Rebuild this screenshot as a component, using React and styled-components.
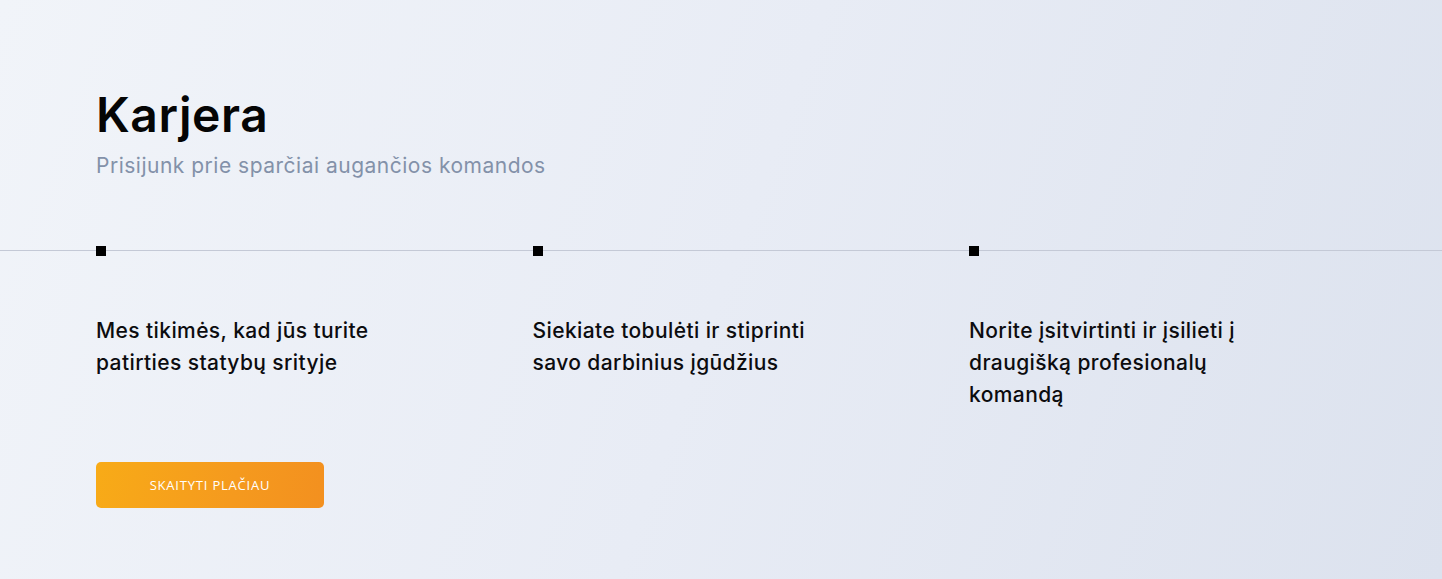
import styled, { createGlobalStyle } from "styled-components";

const GlobalStyle = createGlobalStyle`
  html, body {
    margin: 0;
    padding: 0;
  }
  body {
    font-family: Inter, "Noto Sans", sans-serif;
    -webkit-font-smoothing: antialiased;
  }
`;

/* ────── LAYOUT ────── */
const Section = styled.section`
  width: 100%;
  height: 579px;
  box-sizing: border-box;
  padding-top: 86px;
  background: linear-gradient(110deg, #f1f4f9 0%, #e8ecf5 50%, #dce2ee 100%);
  overflow: hidden;
`;

const Header = styled.header`
  padding-left: 96px;
`;

const Title = styled.h1`
  margin: 0;
  font-size: 48px;
  line-height: 58px;
  font-weight: 600;
  color: #050505;
  letter-spacing: 0.6px;
`;

const Subtitle = styled.p`
  margin: 8px 0 0;
  font-size: 21px;
  line-height: 28px;
  font-weight: 400;
  color: #8391a9;
  letter-spacing: 0.5px;
`;

/* ────── TIMELINE ────── */
const Timeline = styled.div`
  margin-top: 70px;
  border-top: 1px solid #c4c9d6;
  padding-left: 96px;
`;

const Columns = styled.div`
  display: grid;
  grid-template-columns: repeat(3, 436.5px);
`;

const Item = styled.div`
  display: flex;
  flex-direction: column;
`;

const Marker = styled.span`
  display: block;
  width: 10px;
  height: 10px;
  margin-top: -5px;
  background: #000;
`;

const ItemText = styled.p`
  margin: 59px 0 0;
  max-width: 300px;
  font-size: 21px;
  line-height: 32px;
  font-weight: 500;
  letter-spacing: 0.4px;
  color: #0c0c0f;
`;

/* ────── BUTTON ────── */
const Actions = styled.div`
  padding-left: 96px;
  margin-top: 51px;
`;

const Button = styled.button`
  width: 228px;
  height: 46px;
  border: none;
  border-radius: 5px;
  background: linear-gradient(100deg, #f8ab17 0%, #f59a1e 60%, #f3901f 100%);
  color: #fff;
  font-family: "Open Sans", sans-serif;
  font-size: 13px;
  letter-spacing: 0.8px;
  text-transform: uppercase;
  cursor: pointer;
`;

const items = [
  "Mes tikimės, kad jūs turite patirties statybų srityje",
  "Siekiate tobulėti ir stiprinti savo darbinius įgūdžius",
  "Norite įsitvirtinti ir įsilieti į draugišką profesionalų komandą",
];

export default function App() {
  return (
    <>
      <GlobalStyle />
      <Section>
        <Header>
          <Title>Karjera</Title>
          <Subtitle>Prisijunk prie sparčiai augančios komandos</Subtitle>
        </Header>
        <Timeline>
          <Columns>
            {items.map((text) => (
              <Item key={text}>
                <Marker />
                <ItemText>{text}</ItemText>
              </Item>
            ))}
          </Columns>
        </Timeline>
        <Actions>
          <Button>Skaityti plačiau</Button>
        </Actions>
      </Section>
    </>
  );
}
